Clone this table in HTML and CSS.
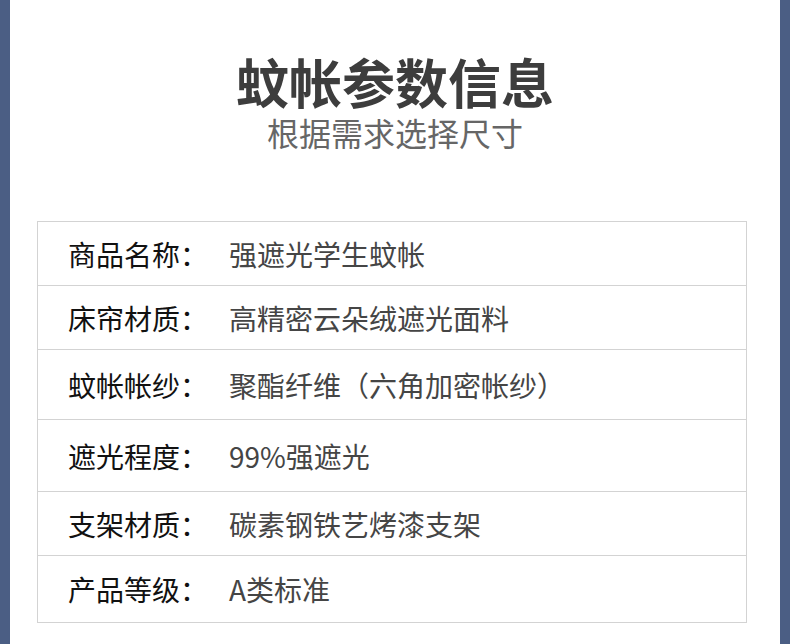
FILE: index.html
```html
<!DOCTYPE html>
<html lang="zh-CN">
<head>
<meta charset="utf-8">
<link rel="stylesheet" href="styles.css">
</head>
<body>
<div class="page">
  <header class="head">
    <h1 class="title">蚊帐参数信息</h1>
    <p class="subtitle">根据需求选择尺寸</p>
  </header>
  <div class="table">
    <div class="row r64"><span class="label">商品名称：</span><span class="value">强遮光学生蚊帐</span></div>
    <div class="row r64"><span class="label">床帘材质：</span><span class="value">高精密云朵绒遮光面料</span></div>
    <div class="row r70"><span class="label">蚊帐帐纱：</span><span class="value">聚酯纤维（六角加密帐纱）</span></div>
    <div class="row r72"><span class="label">遮光程度：</span><span class="value">99%强遮光</span></div>
    <div class="row r64"><span class="label">支架材质：</span><span class="value">碳素钢铁艺烤漆支架</span></div>
    <div class="row r66 last"><span class="label">产品等级：</span><span class="value">A类标准</span></div>
  </div>
</div>
</body>
</html>
```

FILE: styles.css
```css
html, body {
  margin: 0;
  padding: 0;
}
body {
  width: 790px;
  height: 644px;
  overflow: hidden;
  font-family: "Noto Sans CJK SC", "Noto Sans", sans-serif;
}
.page {
  box-sizing: border-box;
  width: 790px;
  height: 644px;
  background: #ffffff;
  border-left: 10px solid #4b5e84;
  border-right: 10px solid #4b5e84;
  padding: 55px 27px 0 27px;
}
.head {
  display: flex;
  flex-direction: column;
  align-items: center;
  height: 95px;
}
.title {
  margin: 0;
  font-size: 53px;
  line-height: 53px;
  font-weight: 700;
  color: #3d3d3d;
}
.subtitle {
  margin: 8px 0 0 0;
  font-size: 32px;
  line-height: 32px;
  font-weight: 400;
  color: #666666;
}
.table {
  margin-top: 71px;
  border: 1px solid #d3d3d3;
  width: 710px;
  box-sizing: border-box;
}
.row {
  box-sizing: border-box;
  display: flex;
  align-items: center;
  padding-left: 30px;
  border-bottom: 1px solid #d3d3d3;
  font-size: 28px;
}
.row.last { border-bottom: none; }
.r64 { height: 64px; }
.r66 { height: 66px; }
.r70 { height: 70px; }
.r72 { height: 72px; }
.label {
  width: 161px;
  flex: none;
  color: #111111;
}
.value {
  color: #454545;
}
```
